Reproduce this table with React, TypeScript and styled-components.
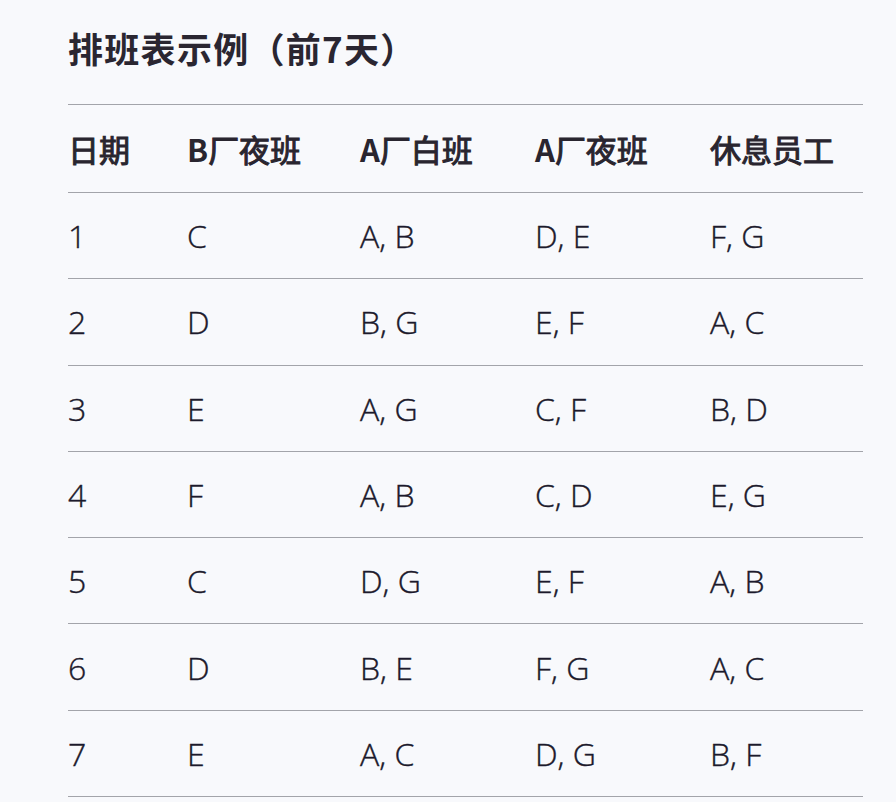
import styled, { createGlobalStyle } from 'styled-components';

const GlobalStyle = createGlobalStyle`
    html, body {
        margin: 0;
        padding: 0;
        background: #f8f9fc;
    }
`;

const StyledPage = styled.div`
    width: 896px;
    height: 802px;
    box-sizing: border-box;
    padding: 18px 0 0 68px;
    background: #f8f9fc;
    font-family: 'Open Sans', 'Noto Sans CJK SC', sans-serif;
    color: #1c1a2c;
    overflow: hidden;
`;

const StyledTitle = styled.h2`
    margin: 0;
    height: 86px;
    font-family: 'Noto Sans CJK SC', sans-serif;
    font-size: 35px;
    font-weight: 700;
    line-height: 60px;
    letter-spacing: 1.3px;
    color: #2a2631;
`;

const StyledTable = styled.div`
    width: 795px;
    border-bottom: 1px solid #a3a4aa;
`;

const StyledRow = styled.div<{ $header?: boolean }>`
    display: grid;
    grid-template-columns: 119px 173px 175px 175px 153px;
    align-items: center;
    box-sizing: border-box;
    height: ${(p) => (p.$header ? '88px' : '86.3px')};
    border-top: 1px solid #a3a4aa;
`;

const StyledCell = styled.div<{ $header?: boolean }>`
    font-size: ${(p) => (p.$header ? '31px' : '32px')};
    font-weight: ${(p) => (p.$header ? 400 : 300)};
    font-family: ${(p) =>
        p.$header ? "'Noto Sans CJK SC', sans-serif" : "'Open Sans', 'Noto Sans CJK SC', sans-serif"};
    color: ${(p) => (p.$header ? '#29252f' : '#1c1a2c')};
    -webkit-text-stroke: ${(p) => (p.$header ? '1px #29252f' : '0.4px #1c1a2c')};
    white-space: nowrap;

    b {
        font-weight: 700;
        -webkit-text-stroke: 0;
    }
`;

const headers = [
    ['', '日期'],
    ['B', '厂夜班'],
    ['A', '厂白班'],
    ['A', '厂夜班'],
    ['', '休息员工'],
];

const rows = [
    ['1', 'C', 'A, B', 'D, E', 'F, G'],
    ['2', 'D', 'B, G', 'E, F', 'A, C'],
    ['3', 'E', 'A, G', 'C, F', 'B, D'],
    ['4', 'F', 'A, B', 'C, D', 'E, G'],
    ['5', 'C', 'D, G', 'E, F', 'A, B'],
    ['6', 'D', 'B, E', 'F, G', 'A, C'],
    ['7', 'E', 'A, C', 'D, G', 'B, F'],
];

function App() {
    return (
        <>
            <GlobalStyle />
            <StyledPage>
                <StyledTitle>排班表示例（前7天）</StyledTitle>
                <StyledTable>
                    <StyledRow $header>
                        {headers.map(([latin, cjk], i) => (
                            <StyledCell $header key={i}>
                                {latin && <b>{latin}</b>}
                                {cjk}
                            </StyledCell>
                        ))}
                    </StyledRow>
                    {rows.map((row) => (
                        <StyledRow key={row[0]}>
                            {row.map((cell, i) => (
                                <StyledCell key={i}>{cell}</StyledCell>
                            ))}
                        </StyledRow>
                    ))}
                </StyledTable>
            </StyledPage>
        </>
    );
}

export default App;
